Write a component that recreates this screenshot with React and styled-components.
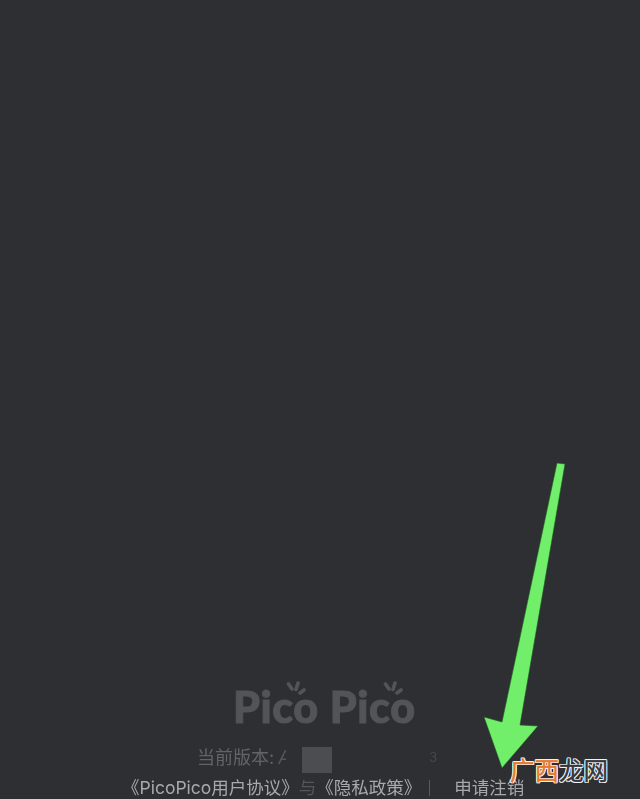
import React from "react";
import styled, { createGlobalStyle } from "styled-components";

const Global = createGlobalStyle`
  html, body { margin: 0; padding: 0; background: #2e2f33; }
  body { font-family: "Inter", "Noto Sans CJK SC", sans-serif; }
`;

const Page = styled.div`
  position: relative;
  width: 640px;
  height: 799px;
  overflow: hidden;
  background: #2e2f33;
  display: flex;
  flex-direction: column;
  justify-content: flex-end;
  align-items: stretch;
`;

const Logo = styled.div`
  align-self: flex-start;
  margin-left: 233px;
  display: flex;
  gap: 11px;
  height: 38px;
  align-items: flex-end;
`;

const LogoWord = styled.span`
  position: relative;
  font-family: "Lato", sans-serif;
  font-weight: 900;
  font-size: 43px;
  line-height: 38px;
  letter-spacing: 0.6px;
  color: #535458;
  -webkit-text-stroke: 1px #535458;
  filter: blur(0.6px);
`;

const Paw = styled.svg`
  position: absolute;
  top: -7px;
  right: 13px;
  width: 20px;
  height: 14px;
`;

const Version = styled.div`
  margin-top: 21px;
  margin-left: 197px;
  height: 29px;
  display: flex;
  align-items: flex-start;
  font-size: 18px;
  line-height: 21px;
  color: #636468;
  filter: blur(0.5px);
`;

const ClippedValue = styled.span`
  display: inline-block;
  width: 8px;
  margin-left: 4px;
  overflow: hidden;
  color: #55565a;
  font-style: italic;
`;

const Redaction = styled.div`
  width: 30px;
  height: 26px;
  margin-left: 16px;
  background: #4c4d51;
`;

const Trace = styled.span`
  margin-left: 97px;
  font-size: 13px;
  color: #46474b;
`;

const Links = styled.div`
  margin-left: 122px;
  height: 24px;
  margin-bottom: -1px;
  display: flex;
  align-items: center;
  font-size: 17.5px;
  line-height: 24px;
  color: #a8a9ac;
  white-space: nowrap;
  filter: blur(0.4px);
`;

const Joiner = styled.span`
  color: #55565a;
`;

const Divider = styled.span`
  width: 1px;
  height: 16px;
  margin-left: 8px;
  margin-right: 24px;
  background: #5a5b5f;
`;

const Arrow = styled.svg`
  position: absolute;
  left: 0;
  top: 0;
  pointer-events: none;
`;

const Watermark = styled.div`
  position: absolute;
  left: 510px;
  top: 755px;
  display: flex;
  font-family: "Noto Sans CJK SC", sans-serif;
  font-size: 24.5px;
  line-height: 30px;
`;

const WaterChar = styled.span`
  color: ${(p) => p.$color};
  -webkit-text-stroke: 0.4px ${(p) => p.$color};
  text-shadow: 1px 0 0 #f4f4f4, -1px 0 0 #f4f4f4, 0 1px 0 #f4f4f4, 0 -1px 0 #f4f4f4,
    1px 1px 0 #f4f4f4, -1px -1px 0 #f4f4f4, 1px -1px 0 #f4f4f4, -1px 1px 0 #f4f4f4;
`;

const PawMarks = () => (
  <Paw viewBox="0 0 20 14" aria-hidden="true">
    <g stroke="#535458" strokeWidth="3.6" strokeLinecap="round">
      <path d="M2.5 3 L6 8" />
      <path d="M12 2 L10 8.5" />
      <path d="M18 9 L14 12" />
    </g>
  </Paw>
);

export default function App() {
  return (
    <Page>
      <Global />
      <Logo>
        <LogoWord>
          Pico
          <PawMarks />
        </LogoWord>
        <LogoWord>
          Pico
          <PawMarks />
        </LogoWord>
      </Logo>
      <Version>
        当前版本:
        <ClippedValue>A</ClippedValue>
        <Redaction />
        <Trace>3</Trace>
      </Version>
      <Links>
        《PicoPico用户协议》
        <Joiner>与</Joiner>
        《隐私政策》
        <Divider />
        申请注销
      </Links>
      <Arrow width="640" height="799" viewBox="0 0 640 799" aria-hidden="true">
        <path
          d="M557 463 L565 464 L520 725 L538 726 L502 768 L484 717 L502 722 Z"
          fill="#72ef6a"
          stroke="#1f5a24"
          strokeWidth="0.6"
        />
      </Arrow>
      <Watermark>
        <WaterChar $color="#e8792b">广</WaterChar>
        <WaterChar $color="#e8792b">西</WaterChar>
        <WaterChar $color="#33363c">龙</WaterChar>
        <WaterChar $color="#33363c">网</WaterChar>
      </Watermark>
    </Page>
  );
}
